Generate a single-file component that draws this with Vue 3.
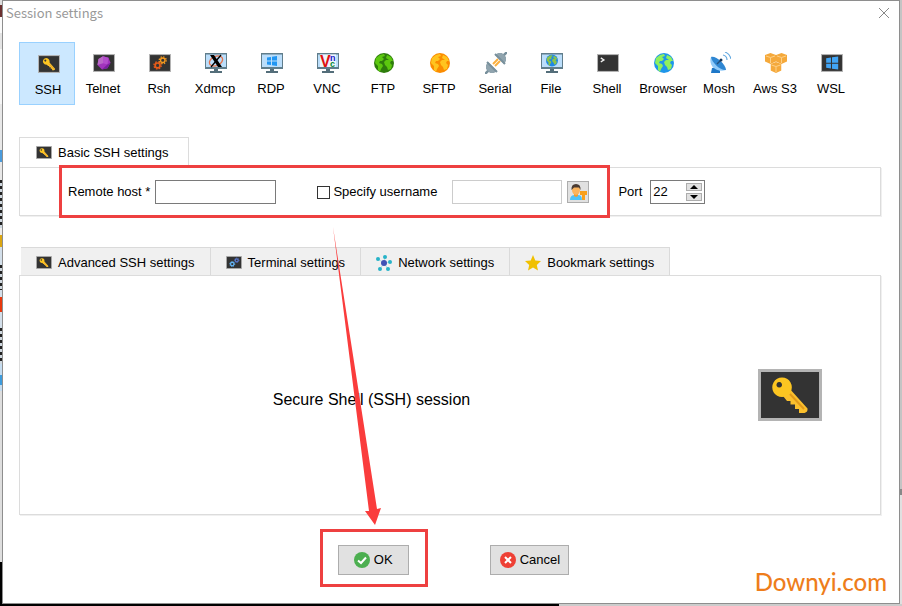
<template>
  <div class="desktop">
    <svg class="sprite" aria-hidden="true">
      <defs>
        <symbol id="i-terminal" viewBox="0 0 64 52">
          <rect x="1.5" y="1.5" width="61" height="49" fill="#333" stroke="#b4b4b4" stroke-width="3" />
        </symbol>
        <symbol id="i-key" viewBox="0 0 64 52">
          <use href="#i-terminal" />
          <path d="M31 19 49.500 39.500Q50 43 46.500 44H41V40H37V35.500H32.500V32H29L25 27Z" fill="#fbc02d" />
          <path d="M32 25 46 40" stroke="#e29a1b" stroke-width="2" />
          <path fill-rule="evenodd" d="M24 8.500a9.800 9.800 0 1 0 .1 0ZM21.300 13a2.800 2.800 0 1 1-.1 0Z" fill="#fcc521" />
        </symbol>
        <symbol id="i-gem" viewBox="0 0 64 52">
          <use href="#i-terminal" />
          <path d="M29 6 45 11 51 25 42 41 26 45 13 32 16 14Z" fill="#a234bd" />
          <path d="M29 6 16 14 13 32 29 27Z" fill="#ba68c8" />
          <path d="M29 6 29 27 42 30 45 11Z" fill="#b44dcc" />
          <path d="M42 30 51 25 42 41 26 45Z" fill="#7b1fa2" />
        </symbol>
        <symbol id="i-gears" viewBox="0 0 64 52">
          <use href="#i-terminal" />
          <g fill="none" stroke="#e65b1a">
            <circle cx="25" cy="33" r="7" stroke-width="5" />
            <circle cx="25" cy="33" r="10.500" stroke-width="4" stroke-dasharray="4.500 3.750" />
          </g>
          <g fill="none" stroke="#f59a1f">
            <circle cx="40" cy="18" r="6.500" stroke-width="4" />
            <circle cx="40" cy="18" r="10" stroke-width="4" stroke-dasharray="4 3.850" />
          </g>
        </symbol>
        <symbol id="i-gears-blue" viewBox="0 0 64 52">
          <use href="#i-terminal" />
          <g fill="none" stroke="#64b5f6">
            <circle cx="25" cy="32" r="7" stroke-width="5" />
            <circle cx="25" cy="32" r="10" stroke-width="4" stroke-dasharray="4 3.850" />
          </g>
          <g fill="none" stroke="#5878d0">
            <circle cx="43" cy="17" r="6" stroke-width="5" />
            <circle cx="43" cy="17" r="9" stroke-width="3" stroke-dasharray="4 3.070" />
          </g>
        </symbol>
        <symbol id="i-monitor" viewBox="0 0 22 20">
          <path d="M0 0H22V16H0Z" fill="#607d8b" />
          <path d="M1 1.500H21V14H1Z" fill="#bbdefb" />
          <path d="M9 16H13V18H17V20H5V18H9Z" fill="#546e7a" />
        </symbol>
        <symbol id="i-x11" viewBox="0 0 22 20">
          <use href="#i-monitor" />
          <ellipse cx="11" cy="8" rx="7" ry="4.500" fill="none" stroke="#e6724a" stroke-width="1.300" transform="rotate(-25 11 8)" />
          <path d="M5 2H9L17 14H13Z" fill="#000" />
          <path d="M16 2 6 14" stroke="#000" stroke-width="1.300" />
        </symbol>
        <symbol id="i-rdp" viewBox="0 0 22 20">
          <use href="#i-monitor" />
          <path d="M6 4.500 10 4V7.500H6ZM11 3.800 16 3V7.500H11ZM6 8.500H10V12L6 11.400ZM11 8.500H16V13L11 12.200Z" fill="#2196f3" />
        </symbol>
        <symbol id="i-vnc" viewBox="0 0 22 20">
          <use href="#i-monitor" />
          <rect x="3" y="1.500" width="16" height="12.500" fill="#eef5fc" />
          <g font-family="Liberation Sans" font-weight="bold">
            <text x="3" y="13.500" font-size="16" fill="#e01010">V</text>
            <text x="13" y="7.500" font-size="9" fill="#1818c8">n</text>
            <text x="13" y="13.500" font-size="9" fill="#0a8a38">c</text>
          </g>
        </symbol>
        <symbol id="i-land" viewBox="0 0 20 20">
          <path d="M2 5 6 2 10 1 11 3 8 4 10 6 8 8 6 8 5 10 8 11 9 13 7 16 6 19 4 17 4 13 1 10Z" />
          <path d="M13 2 17 4 19 8 17 8 16 10 18 12 17 16 14 17 13 14 11 12 10 9 12 7 15 7 12 5Z" />
        </symbol>
        <symbol id="i-ftp" viewBox="0 0 22 20">
          <circle cx="11" cy="10" r="10" fill="#2e7d0c" />
          <use href="#i-land" x="1" width="20" height="20" fill="#5cc80f" />
        </symbol>
        <symbol id="i-sftp" viewBox="0 0 22 20">
          <circle cx="11" cy="10" r="10" fill="#fb8c00" />
          <use href="#i-land" x="1" width="20" height="20" fill="#ffc41f" />
        </symbol>
        <symbol id="i-browser" viewBox="0 0 22 20">
          <circle cx="11" cy="10" r="10" fill="#1e96ea" />
          <use href="#i-land" x="1" width="20" height="20" fill="#8ef05e" />
        </symbol>
        <symbol id="i-file" viewBox="0 0 22 20">
          <use href="#i-monitor" />
          <circle cx="11" cy="7.500" r="6" fill="#1e88e5" />
          <use href="#i-land" x="5" y="1.500" width="12" height="12" fill="#8bc34a" />
        </symbol>
        <symbol id="i-serial" viewBox="0 0 22 22">
          <path d="M0 22 4 18M18 4 22 0" stroke="#78909c" stroke-width="2.500" />
          <path d="M8 12 13 7M10 14 15 9" stroke="#fbb040" stroke-width="2" />
          <path d="M3 10 12 19 9 21H5L1 17V13Z" fill="#90a4ae" />
          <path d="M10 3 19 12 21 9V5L17 1H13Z" fill="#90a4ae" />
          <path d="M2 10 12 20M10 2 20 12" stroke="#78909c" stroke-width="2" />
        </symbol>
        <symbol id="i-shell" viewBox="0 0 64 52">
          <use href="#i-terminal" />
          <path d="M11 11 20 17 11 23" fill="none" stroke="#eee" stroke-width="4" />
        </symbol>
        <symbol id="i-mosh" viewBox="0 0 22 22">
          <path d="M3 16 9 15 11 19V21H2Z" fill="#1e78c8" />
          <path d="M2 5C-1 13 7 21 17 18Z" fill="#90caf9" />
          <path d="M2 5C6 3 17 12 17 18 12 19 3 11 2 5Z" fill="#2e86d2" />
          <path d="M8 12 12 8" stroke="#234f7c" stroke-width="1.500" />
          <circle cx="12" cy="8" r="1.500" fill="#173a5e" />
          <path d="M14 3Q18 4 18 8M16 0Q21 2 22 7" fill="none" stroke="#64a9e0" stroke-width="1.200" />
        </symbol>
        <symbol id="i-cube" viewBox="0 0 11 11">
          <path d="M5.500 0 11 2V8.500L5.500 11 0 8.500V2Z" fill="#f5a93b" />
          <path d="M1 3 5.500 4.500 10 3M5.500 5V10" fill="none" stroke="#ffdb9c" stroke-width="0.800" />
        </symbol>
        <symbol id="i-aws" viewBox="0 0 22 20">
          <use href="#i-cube" x="0" y="0" width="11" height="11" />
          <use href="#i-cube" x="11" y="0" width="11" height="11" />
          <use href="#i-cube" x="5.500" y="9" width="11" height="11" />
        </symbol>
        <symbol id="i-wsl" viewBox="0 0 64 52">
          <use href="#i-terminal" />
          <path d="M15 12 29 10V25H15ZM32 9.500 50 7V25H32ZM15 28H29V42L15 40ZM32 28H50V45L32 42.500Z" fill="#42a5f5" />
        </symbol>
        <symbol id="i-network" viewBox="0 0 16 16">
          <path d="M8 8 2 4M8 8 9 2M8 8 14 7M8 8 12 14M8 8 4 14" stroke="#b5dfe6" stroke-width="1" />
          <g fill="#26b3c8">
            <circle cx="2" cy="4" r="2" />
            <circle cx="9" cy="2" r="2" />
            <circle cx="14" cy="7" r="2" />
            <circle cx="12" cy="14" r="2" />
            <circle cx="4" cy="14" r="2" />
          </g>
          <circle cx="8" cy="8" r="3" fill="#3f51b5" />
        </symbol>
        <symbol id="i-star" viewBox="0 0 16 16">
          <path d="M8 0 10.300 5.500 16 6 11.800 9.900 13 15.500 8 12.600 3 15.500 4.200 9.900 0 6 5.700 5.500Z" fill="#f0c000" />
        </symbol>
        <symbol id="i-user" viewBox="0 0 18 18">
          <path d="M1 17Q1 12 6 12H9Q13 12 13 17Z" fill="#4fc3f7" />
          <path d="M5 11H9V13L7 14 5 13Z" fill="#f29b2c" />
          <ellipse cx="7" cy="7" rx="4" ry="5" fill="#fbb45c" />
          <path d="M2.500 7Q2 1 7 1T11.500 7L10 4.500H5Z" fill="#4a3b32" />
          <path d="M11 8H18V12H16V17H13V12H11Z" fill="#f9a01b" />
        </symbol>
        <symbol id="i-ok" viewBox="0 0 16 16">
          <circle cx="8" cy="8" r="8" fill="#4caf50" />
          <path d="M4 8.500 7 11 12 5.500" fill="none" stroke="#fff" stroke-width="2" />
        </symbol>
        <symbol id="i-cancel" viewBox="0 0 16 16">
          <circle cx="8" cy="8" r="8" fill="#ee4035" />
          <path d="M5 5 11 11M11 5 5 11" stroke="#fff" stroke-width="2" />
        </symbol>
      </defs>
    </svg>

    <div class="behind-left" aria-hidden="true">
      <span
        v-for="(part, idx) in sideParts"
        :key="idx"
        class="side-part"
        :style="{ flexGrow: part.size, background: part.color }"
      ></span>
    </div>

    <section class="dialog" aria-label="Session settings">
      <header class="title-bar">
        <h1 class="title">Session settings</h1>
        <button class="close-btn" aria-label="Close">
          <svg viewBox="0 0 12 12"><path d="M1 1 11 11M11 1 1 11" stroke="#888" fill="none" /></svg>
        </button>
      </header>

      <nav class="session-types">
        <button
          v-for="type in sessionTypes"
          :key="type.name"
          class="type-btn"
          :class="{ active: selected === type.name }"
          @click="selected = type.name"
        >
          <svg class="type-icon"><use :href="'#i-' + type.icon" /></svg>
          <span>{{ type.name }}</span>
        </button>
      </nav>

      <div class="basic">
        <div class="basic-tab">
          <svg class="tab-icon"><use href="#i-key" /></svg>
          <span>Basic SSH settings</span>
        </div>
        <form class="panel basic-panel" @submit.prevent>
          <div class="field-group">
            <label for="host">Remote host *</label>
            <input id="host" v-model="host" class="text-input host-input" type="text">
            <input id="specify" v-model="specifyUser" class="check" type="checkbox">
            <label for="specify" class="check-label">Specify username</label>
            <input v-model="username" class="text-input user-input" type="text" aria-label="Username" :disabled="!specifyUser">
            <button class="user-btn" type="button" aria-label="Saved users">
              <svg><use href="#i-user" /></svg>
            </button>
          </div>
          <label for="port" class="port-label">Port</label>
          <div class="spinner">
            <input id="port" v-model.number="port" type="text">
            <div class="steps">
              <button type="button" aria-label="Increase port" @click="port++">
                <svg viewBox="0 0 8 4"><path d="M4 0 8 4H0Z" /></svg>
              </button>
              <button type="button" aria-label="Decrease port" @click="port--">
                <svg viewBox="0 0 8 4"><path d="M0 0H8L4 4Z" /></svg>
              </button>
            </div>
          </div>
        </form>
      </div>

      <div class="tabs">
        <button v-for="tab in tabs" :key="tab.label" class="tab">
          <svg class="tab-icon" :class="{ tall: tab.tall }"><use :href="'#i-' + tab.icon" /></svg>
          <span>{{ tab.label }}</span>
        </button>
      </div>
      <div class="panel session-panel">
        <p class="session-name">Secure Shell (SSH) session</p>
        <svg class="session-icon"><use href="#i-key" /></svg>
      </div>

      <footer class="actions">
        <button class="action-btn ok">
          <svg><use href="#i-ok" /></svg>
          <span>OK</span>
        </button>
        <button class="action-btn">
          <svg><use href="#i-cancel" /></svg>
          <span>Cancel</span>
        </button>
      </footer>

      <span class="watermark">Downyi.com</span>
      <svg class="arrow" viewBox="0 0 50 300" aria-hidden="true">
        <path d="M1 0 45 282 49 281 43 298 33 284 37 284Z" fill="#fa3c3c" />
      </svg>
    </section>

    <div class="behind-right"></div>
    <div class="behind-bottom"></div>
  </div>
</template>

<script setup>
import { ref } from 'vue';

const selected = ref('SSH');
const host = ref('');
const username = ref('');
const specifyUser = ref(false);
const port = ref(22);

const sessionTypes = [
  { name: 'SSH', icon: 'key' },
  { name: 'Telnet', icon: 'gem' },
  { name: 'Rsh', icon: 'gears' },
  { name: 'Xdmcp', icon: 'x11' },
  { name: 'RDP', icon: 'rdp' },
  { name: 'VNC', icon: 'vnc' },
  { name: 'FTP', icon: 'ftp' },
  { name: 'SFTP', icon: 'sftp' },
  { name: 'Serial', icon: 'serial' },
  { name: 'File', icon: 'file' },
  { name: 'Shell', icon: 'shell' },
  { name: 'Browser', icon: 'browser' },
  { name: 'Mosh', icon: 'mosh' },
  { name: 'Aws S3', icon: 'aws' },
  { name: 'WSL', icon: 'wsl' }
];

const tabs = [
  { label: 'Advanced SSH settings', icon: 'key' },
  { label: 'Terminal settings', icon: 'gears-blue' },
  { label: 'Network settings', icon: 'network', tall: true },
  { label: 'Bookmark settings', icon: 'star', tall: true }
];

// slice of the main window's sidebar that shows beside the dialog
const letters = 'repeating-linear-gradient(#222 0 3px, #cfd8e0 3px 6px)';
const sideParts = [
  { size: 5, color: '#ddd' },
  { size: 12, color: '#6b3030' },
  { size: 16, color: '#fafafa' },
  { size: 16, color: '#e4e4e4' },
  { size: 55, color: '#f6f6f6' },
  { size: 46, color: '#e8e8e8' },
  { size: 12, color: '#4a9bdc' },
  { size: 18, color: '#e8e8e8' },
  { size: 48, color: letters },
  { size: 7, color: '#eee' },
  { size: 12, color: '#dba612' },
  { size: 18, color: '#d3dfea' },
  { size: 25, color: letters },
  { size: 7, color: '#d3dfea' },
  { size: 15, color: '#e8380d' },
  { size: 16, color: '#d3dfea' },
  { size: 36, color: letters },
  { size: 11, color: '#c4dcf0' },
  { size: 10, color: '#3c9bdc' },
  { size: 6, color: '#c4dcf0' },
  { size: 171, color: '#dedede' },
  { size: 42, color: '#000' }
];
</script>

<style>
body {
  margin: 0;
}
</style>

<style scoped>
.desktop {
  display: grid;
  grid-template-columns: 2px 1fr 2px;
  grid-template-rows: 1fr 2px;
  min-height: 100vh;
  font-family: "Liberation Sans", Arial, sans-serif;
  font-size: 13px;
  line-height: 16px;
  color: #000;
}

.desktop *,
.desktop *::after {
  box-sizing: border-box;
}

.sprite {
  position: absolute;
  width: 0;
  height: 0;
}

.behind-left {
  display: flex;
  flex-direction: column;
}

.side-part {
  flex-basis: 0;
}

.behind-right {
  background: linear-gradient(#c4c4c4 0 81%, #888 81% 82%, #e0e0e0 82%);
}

.behind-bottom {
  grid-column: 1 / -1;
  background: linear-gradient(90deg, #000 62%, #ccc 62%);
}

.dialog {
  position: relative;
  display: flex;
  flex-direction: column;
  background: #fff;
  border: 1px solid #8e8e8e;
}

button,
input {
  margin: 0;
  padding: 0;
  font: inherit;
  color: inherit;
}

.title-bar {
  display: flex;
  align-items: center;
  justify-content: space-between;
  height: 24px;
  padding: 0 9px 0 3px;
}

.title {
  margin: 0;
  font-family: "Noto Sans CJK SC", "Noto Sans", sans-serif;
  font-size: 13px;
  font-weight: 400;
  color: #999;
}

.close-btn {
  width: 12px;
  height: 12px;
  border: 0;
  background: none;
}

.close-btn svg {
  display: block;
}

.session-types {
  display: flex;
  padding: 17px 16px 0;
}

.type-btn {
  display: flex;
  flex-direction: column;
  align-items: center;
  gap: 7px;
  width: 56px;
  height: 63px;
  padding-top: 9px;
  border: 1px solid transparent;
  background: none;
  white-space: nowrap;
}

.type-btn.active {
  padding-top: 10px;
  padding-left: 2px;
  border-color: #99d1ff;
  background: #cce8ff;
}

.type-icon {
  width: 22px;
  height: 22px;
  margin-left: 2px;
}

.basic {
  margin: 32px 18px 0 16px;
}

.basic-tab {
  display: inline-flex;
  align-items: center;
  gap: 6px;
  height: 30px;
  padding: 0 19px 0 16px;
  border: 1px solid #dcdcdc;
  border-bottom: 0;
  vertical-align: top;
}

.tab-icon {
  width: 16px;
  height: 13px;
}

.tab-icon.tall {
  height: 16px;
}

.panel {
  display: flex;
  align-items: center;
  border: 1px solid #dcdcdc;
  box-shadow: 1px 1px 0 #f0f0f0;
}

.basic-panel {
  padding: 12px 0 11px 39px;
}

.field-group {
  position: relative;
  display: flex;
  align-items: center;
  padding: 0 21px 0 9px;
  white-space: nowrap;
}

.field-group::after {
  content: "";
  position: absolute;
  inset: -15px 0 -14px;
  border: 3px solid #ee4040;
  pointer-events: none;
}

.text-input {
  height: 24px;
  padding: 0 4px;
  border: 1px solid #7a7a7a;
  background: #fff;
}

.host-input {
  width: 121px;
  margin-left: 5px;
}

.user-input {
  width: 110px;
  margin-left: 15px;
}

.user-input:disabled {
  border-color: #ccc;
}

.check {
  appearance: none;
  width: 13px;
  height: 13px;
  margin-left: 41px;
  border: 1px solid #333;
  background: #fff;
}

.check:checked {
  background: #333;
}

.check-label {
  margin-left: 3px;
}

.user-btn {
  width: 22px;
  height: 22px;
  margin-left: 5px;
  padding: 1px;
  border: 1px solid #adadad;
  background: #e1e1e1;
}

.user-btn svg {
  display: block;
  width: 18px;
  height: 18px;
}

.port-label {
  margin-left: 8px;
}

.spinner {
  display: flex;
  align-items: center;
  width: 55px;
  height: 24px;
  margin-left: 8px;
  padding: 0 2px;
  border: 1px solid #7a7a7a;
}

.spinner input {
  flex: 1;
  min-width: 0;
  border: 0;
}

.steps {
  display: flex;
  flex-direction: column;
  gap: 2px;
}

.steps button {
  display: flex;
  align-items: center;
  justify-content: center;
  width: 16px;
  height: 8px;
  border: 1px solid #adadad;
  background: #e1e1e1;
}

.steps svg {
  width: 8px;
  height: 4px;
}

.tabs {
  display: flex;
  margin: 31px 18px 0;
}

.tab {
  display: flex;
  align-items: center;
  gap: 6px;
  height: 28px;
  padding: 2px 15px 0 15px;
  border: solid #dadada;
  border-width: 1px 1px 0 0;
  background: #f0f0f0;
  white-space: nowrap;
}

.session-panel {
  flex: 1;
  min-height: 120px;
  margin: 0 18px 0 16px;
  padding-right: 58px;
}

.session-name {
  flex: 1;
  margin: 0;
  padding-top: 10px;
  font-size: 16px;
  line-height: 20px;
  text-align: center;
}

.session-icon {
  width: 64px;
  height: 52px;
  margin-left: 35px;
}

.actions {
  display: flex;
  justify-content: center;
  gap: 81px;
  padding: 30px 0 28px 5px;
}

.action-btn {
  position: relative;
  display: flex;
  align-items: center;
  gap: 4px;
  height: 30px;
  padding: 0 8px 0 9px;
  border: 1px solid #adadad;
  background: #e1e1e1;
}

.action-btn svg {
  width: 16px;
  height: 16px;
}

.action-btn.ok {
  padding: 0 15px;
}

.action-btn.ok::after {
  content: "";
  position: absolute;
  inset: -17px -20px -13px -19px;
  border: 3px solid #ee4040;
}

.watermark {
  position: absolute;
  right: 12px;
  bottom: 7px;
  font-family: Lato, sans-serif;
  font-size: 24px;
  font-weight: 500;
  line-height: 28px;
  color: #ee7d1b;
}

.arrow {
  position: absolute;
  left: 329px;
  top: 226px;
  width: 50px;
  height: 300px;
  pointer-events: none;
}
</style>
